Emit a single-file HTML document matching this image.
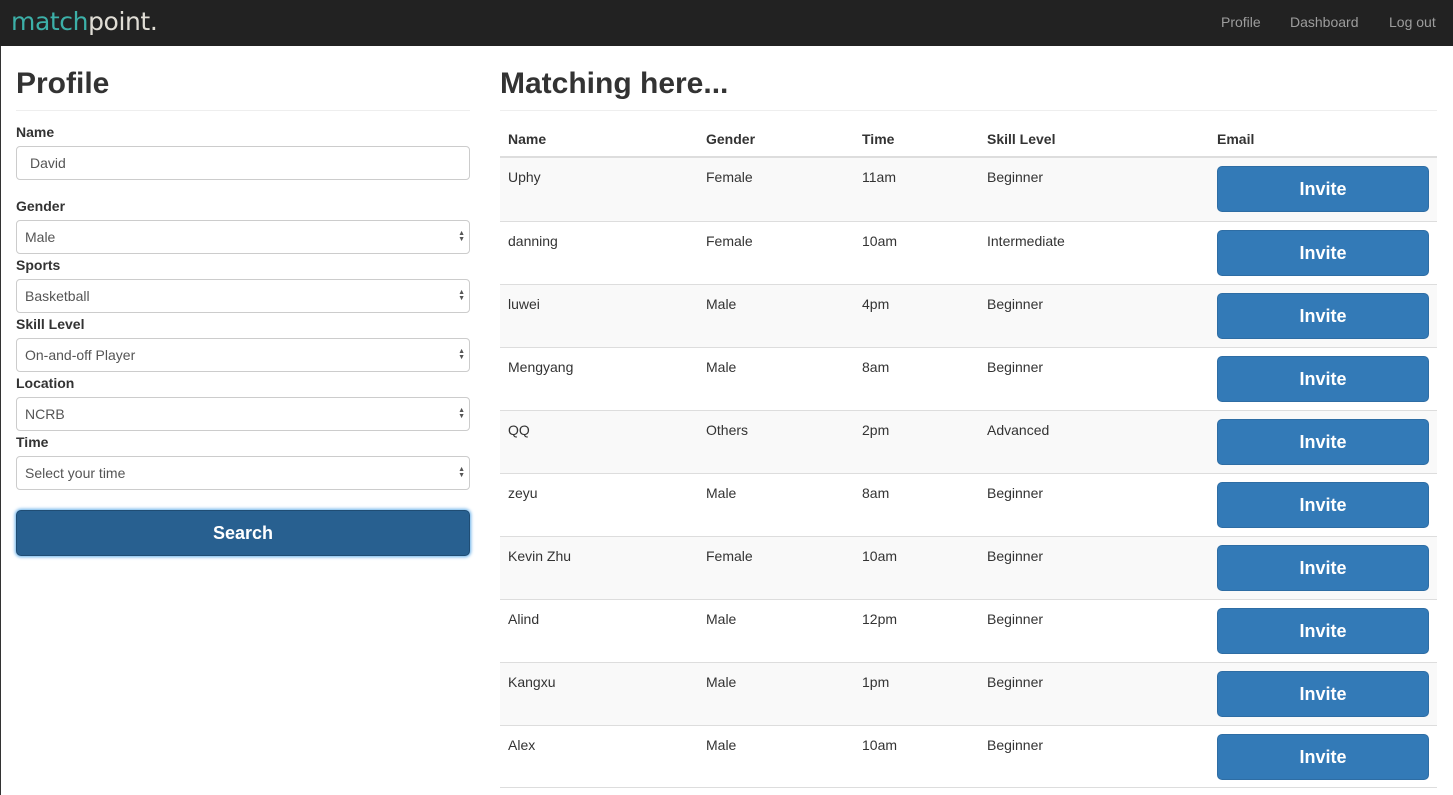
<!DOCTYPE html>
<html><head><meta charset="utf-8"><style>
*{box-sizing:border-box;margin:0;padding:0}
body{width:1453px;height:795px;overflow:hidden;background:#fff;font-family:"Liberation Sans",Arial,sans-serif;font-size:14px;color:#333;position:relative}
.nav{position:absolute;left:0;top:0;width:1453px;height:46px;background:#222}
.logo{position:absolute;left:11px;top:7px;font-family:"DejaVu Sans",sans-serif;font-size:25px;letter-spacing:-0.4px}
.logo .a{color:#3cb0a8}.logo .b{color:#e0ddd5}
.nl{position:absolute;top:14px;color:#9d9d9d;font-size:14px}
.edge{position:absolute;left:0;top:46px;width:1px;height:749px;background:#333}
h1{position:absolute;font-size:30px;font-weight:bold;top:67px;color:#333}
.hr{position:absolute;height:1px;background:#eee;top:110px}
label{position:absolute;left:16px;font-weight:bold;font-size:14px}
.in{position:absolute;left:16px;width:454px;height:34px;border:1px solid #ccc;border-radius:4px;padding:8px 8px;font-size:14px;color:#555}
.arr{position:absolute;right:4px;top:10px;font-size:7px;line-height:6px;color:#555}
.search{position:absolute;left:16px;top:510px;width:454px;height:46px;background:#286090;border:1px solid #204d74;border-radius:5px;box-shadow:0 0 3px 1px #66afe9;color:#fff;font-size:18px;font-weight:bold;text-align:center;line-height:44px}
.th{position:absolute;top:131px;font-weight:bold}
.row{position:absolute;left:500px;width:937px;height:63px;border-top:1px solid #ddd}
.row span{position:absolute;top:11px}
.btn{position:absolute;left:717px;top:8px;width:212px;height:46px;background:#337ab7;border:1px solid #2e6da4;border-radius:5px;color:#fff;font-size:18px;font-weight:bold;text-align:center;line-height:44px}
</style></head><body>
<div class="nav"><div class="logo"><span class="a">match</span><span class="b">point.</span></div>
<span class="nl" style="left:1221px">Profile</span><span class="nl" style="left:1290px">Dashboard</span><span class="nl" style="left:1389px">Log out</span></div>
<div class="edge"></div>
<h1 style="left:16px">Profile</h1><div class="hr" style="left:16px;width:454px"></div>
<label style="top:124px">Name</label><div class="in" style="top:146px;padding-left:13px">David</div>
<label style="top:198px">Gender</label><div class="in" style="top:220px">Male<div class="arr">▲<br>▼</div></div>
<label style="top:257px">Sports</label><div class="in" style="top:279px">Basketball<div class="arr">▲<br>▼</div></div>
<label style="top:316px">Skill Level</label><div class="in" style="top:338px">On-and-off Player<div class="arr">▲<br>▼</div></div>
<label style="top:375px">Location</label><div class="in" style="top:397px">NCRB<div class="arr">▲<br>▼</div></div>
<label style="top:434px">Time</label><div class="in" style="top:456px">Select your time<div class="arr">▲<br>▼</div></div>
<div class="search">Search</div>
<h1 style="left:500px">Matching here...</h1><div class="hr" style="left:500px;width:937px"></div>
<span class="th" style="left:508px">Name</span><span class="th" style="left:706px">Gender</span><span class="th" style="left:862px">Time</span><span class="th" style="left:987px">Skill Level</span><span class="th" style="left:1217px">Email</span>
<div style="position:absolute;left:500px;top:156px;width:937px;height:2px;background:#ddd"></div>
<div class="row" style="top:158px;background:#f9f9f9;border-top:none"><span style="left:8px">Uphy</span><span style="left:206px">Female</span><span style="left:362px">11am</span><span style="left:487px">Beginner</span><div class="btn">Invite</div></div>
<div class="row" style="top:221px"><span style="left:8px">danning</span><span style="left:206px">Female</span><span style="left:362px">10am</span><span style="left:487px">Intermediate</span><div class="btn">Invite</div></div>
<div class="row" style="top:284px;background:#f9f9f9"><span style="left:8px">luwei</span><span style="left:206px">Male</span><span style="left:362px">4pm</span><span style="left:487px">Beginner</span><div class="btn">Invite</div></div>
<div class="row" style="top:347px"><span style="left:8px">Mengyang</span><span style="left:206px">Male</span><span style="left:362px">8am</span><span style="left:487px">Beginner</span><div class="btn">Invite</div></div>
<div class="row" style="top:410px;background:#f9f9f9"><span style="left:8px">QQ</span><span style="left:206px">Others</span><span style="left:362px">2pm</span><span style="left:487px">Advanced</span><div class="btn">Invite</div></div>
<div class="row" style="top:473px"><span style="left:8px">zeyu</span><span style="left:206px">Male</span><span style="left:362px">8am</span><span style="left:487px">Beginner</span><div class="btn">Invite</div></div>
<div class="row" style="top:536px;background:#f9f9f9"><span style="left:8px">Kevin Zhu</span><span style="left:206px">Female</span><span style="left:362px">10am</span><span style="left:487px">Beginner</span><div class="btn">Invite</div></div>
<div class="row" style="top:599px"><span style="left:8px">Alind</span><span style="left:206px">Male</span><span style="left:362px">12pm</span><span style="left:487px">Beginner</span><div class="btn">Invite</div></div>
<div class="row" style="top:662px;background:#f9f9f9"><span style="left:8px">Kangxu</span><span style="left:206px">Male</span><span style="left:362px">1pm</span><span style="left:487px">Beginner</span><div class="btn">Invite</div></div>
<div class="row" style="top:725px;border-bottom:1px solid #ddd"><span style="left:8px">Alex</span><span style="left:206px">Male</span><span style="left:362px">10am</span><span style="left:487px">Beginner</span><div class="btn">Invite</div></div>
</body></html>
